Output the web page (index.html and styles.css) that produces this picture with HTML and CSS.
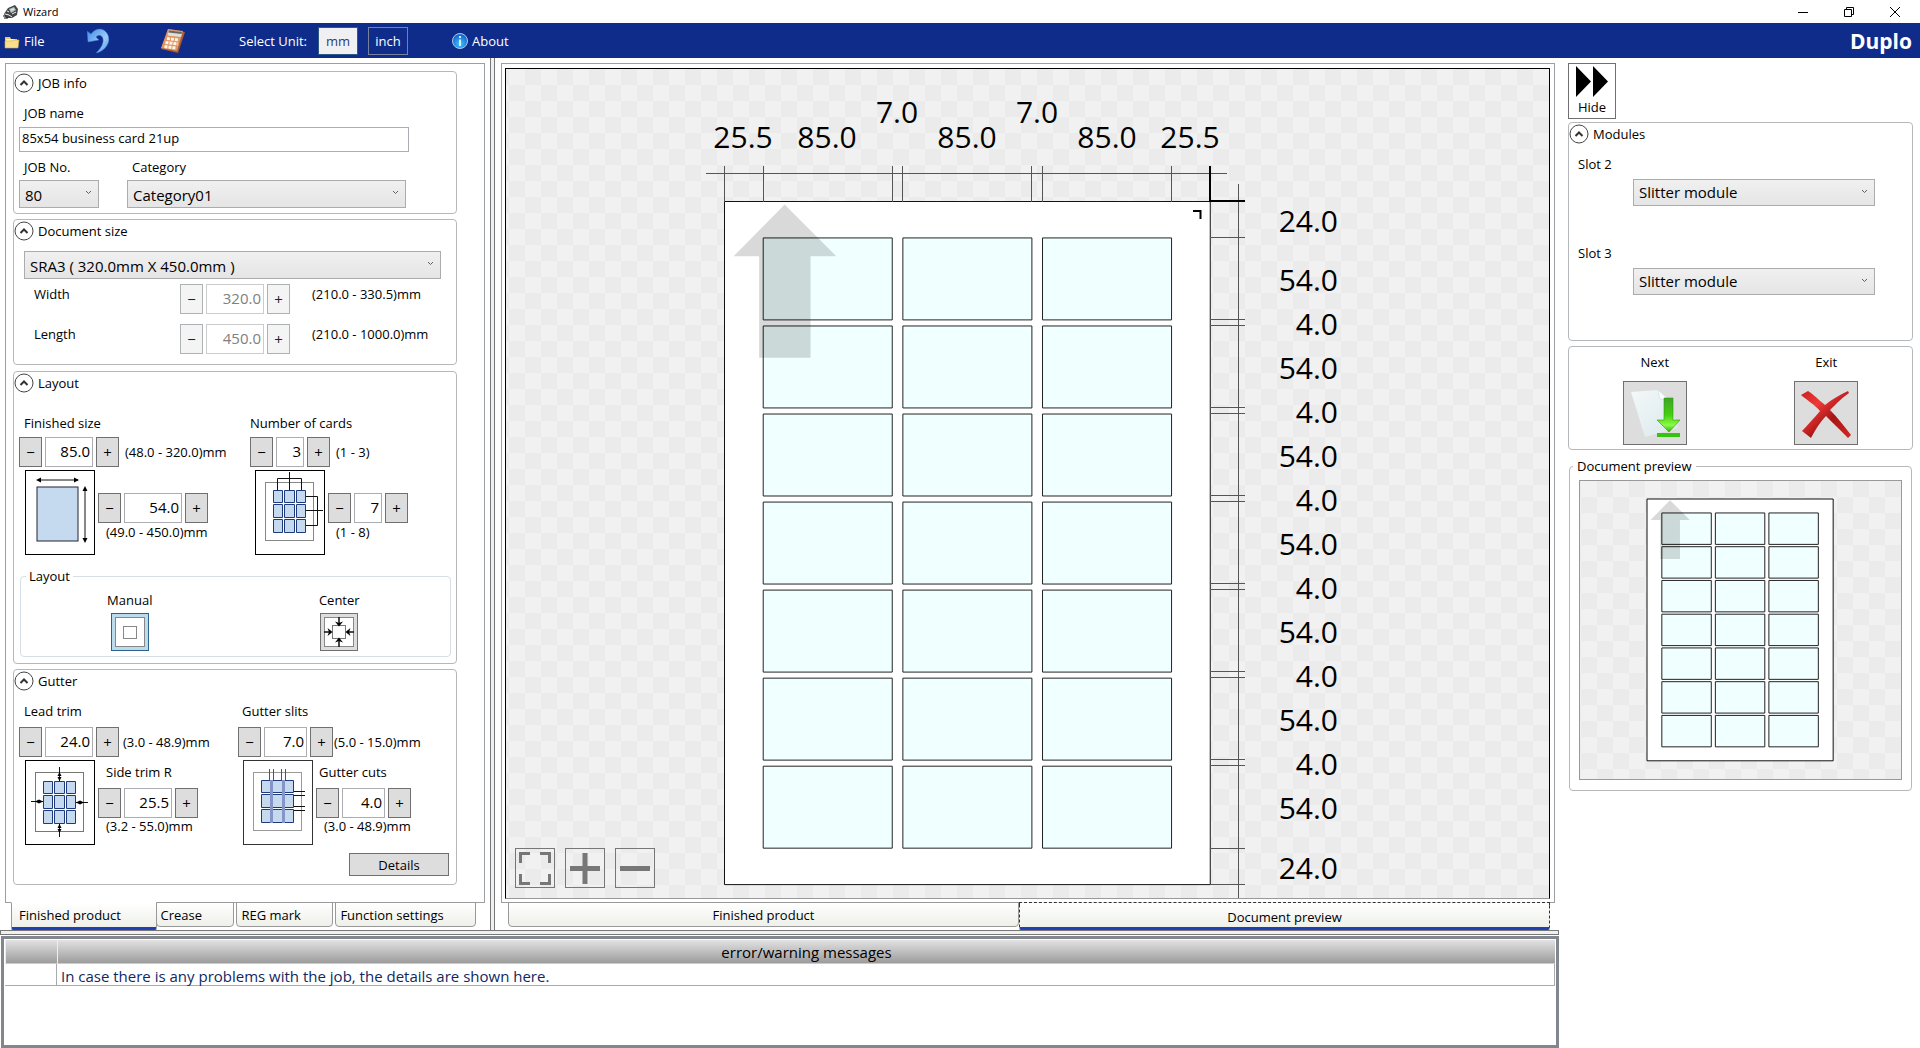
FILE: index.html
```html
<!DOCTYPE html>
<html lang="en">
<head>
<meta charset="utf-8">
<title>Wizard</title>
<link rel="stylesheet" href="styles.css">
</head>
<body>
<svg class="defs" aria-hidden="true">
  <defs>
    <linearGradient id="blueArrow" x1="0" y1="0" x2="1" y2="1"><stop offset="0" stop-color="#3f8be6"/><stop offset=".6" stop-color="#9ccbf8"/><stop offset="1" stop-color="#4b93e6"/></linearGradient>
    <linearGradient id="paper" x1="0" y1="0" x2="1" y2="1"><stop offset="0" stop-color="#f4f8f9"/><stop offset="1" stop-color="#d9e8ec"/></linearGradient>
    <linearGradient id="green" x1="0" y1="0" x2="0" y2="1"><stop offset="0" stop-color="#3fa32a"/><stop offset=".5" stop-color="#45d00c"/><stop offset=".8" stop-color="#8dfa4a"/><stop offset="1" stop-color="#2fae06"/></linearGradient>
    <linearGradient id="red" x1="0" y1="0" x2="1" y2="1"><stop offset="0" stop-color="#c92020"/><stop offset=".3" stop-color="#ee3a38"/><stop offset=".6" stop-color="#a81515"/><stop offset="1" stop-color="#d62424"/></linearGradient>
    <radialGradient id="info" cx=".5" cy=".7" r=".6"><stop offset="0" stop-color="#43c4ff"/><stop offset="1" stop-color="#1668cc"/></radialGradient>
    <symbol id="chevron" viewBox="0 0 20 20"><circle cx="10" cy="10" r="9" fill="#fff" stroke="#444"/><path d="M6.500 12 10 8.500 13.500 12" fill="none" stroke="#333" stroke-width="2"/></symbol>
    <g id="row" class="card-row"><rect x="25.500" width="85" height="54"/><rect x="117.500" width="85" height="54"/><rect x="209.500" width="85" height="54"/></g>
    <g id="sheet">
      <rect class="paper" width="320" height="450"/>
      <use href="#row" y="24"/><use href="#row" y="82"/><use href="#row" y="140"/><use href="#row" y="198"/><use href="#row" y="256"/><use href="#row" y="314"/><use href="#row" y="372"/>
      <path class="feed" d="M39.600 2 73.600 36H56.700V103H22.800V36H6Z"/>
    </g>
    <g id="nine" fill="#c5daef" stroke="#1f3a7a">
      <path d="M.5.500h9v12h-9zM11.500.500h10v12h-10zM23.500.500h9v12h-9zM.5 14.500h9v13h-9zM11.500 14.500h10v13h-10zM23.500 14.500h9v13h-9zM.5 29.500h9v13h-9zM11.500 29.500h10v13h-10zM23.500 29.500h9v13h-9z"/>
    </g>
  </defs>
</svg>

<header class="titlebar">
  <svg class="app-icon" viewBox="0 0 16 14" aria-hidden="true"><path d="M1 9 5 3 12 0 15 4 14 10 9 13 3 13Z" fill="#444"/><path d="M6 4 11 2 13 5 8 8Z" fill="#b8c4c8"/><path d="M2 9 6 10 9 12M9 9 13 7M4 6 6 7M8 5 11 4" stroke="#eee" fill="none"/><path d="M0 11h3M1 13h4" stroke="#111"/></svg>
  <h1>Wizard</h1>
  <div class="window-buttons">
    <button type="button" aria-label="Minimize"><svg viewBox="0 0 12 12"><path d="M1 6.500H11" /></svg></button>
    <button type="button" aria-label="Restore"><svg viewBox="0 0 12 12"><path d="M1.500 3.500h7v7h-7zM3.500 3.500v-2h7v7h-2"/></svg></button>
    <button type="button" aria-label="Close"><svg viewBox="0 0 12 12"><path d="M1 1 11 11M11 1 1 11"/></svg></button>
  </div>
</header>

<nav class="toolbar" aria-label="Main">
  <button type="button" class="tool file"><svg viewBox="0 0 16 14"><path d="M1 2h5l1 2h6v9H1z" fill="#eec768"/><path d="M2 4h9v8H2z" fill="#fff3c0"/><path d="M1 6h7l1-1h6l-1 8H1z" fill="#fbe08d" stroke="#d9a941" stroke-width=".6"/></svg>File</button>
  <button type="button" class="tool undo" aria-label="Undo"><svg viewBox="0 0 22 26"><path d="M0 3 1 14 12 12 9 9C13 5 17 9 16 14 15 19 12 22 9 25 15 24 21 19 22 12 22 5 17 1 13 1 9 1 6 3 4 6Z" fill="url(#blueArrow)" stroke="#2f70cf" stroke-width=".5"/></svg></button>
  <button type="button" class="tool calc" aria-label="Calculator"><svg viewBox="0 0 26 26"><path d="M8 1 25 4 18 25 1 21Z" fill="#a85a30"/><path d="M8 1 23 3 17 23 1 20Z" fill="#dd9568"/><path d="M9 2.500 22 4 21 9 7.500 7.500Z" fill="#dfe0d8"/><path d="M9 2.500 22 4 21.500 6 8.500 4.500Z" fill="#666"/><path d="M7 10.500 19 12M5.500 14.500 18 16M4.500 18.500 16 20" stroke="#fff6e6" stroke-width="3" stroke-dasharray="3 1"/></svg></button>
  <span class="unit-label">Select Unit:</span>
  <button type="button" class="unit on" aria-pressed="true">mm</button>
  <button type="button" class="unit" aria-pressed="false">inch</button>
  <button type="button" class="tool about"><svg viewBox="0 0 16 16"><circle cx="8" cy="8" r="7.500" fill="url(#info)" stroke="#a9cdee"/><path d="M8 6.500V13M8 3v2" stroke="#fff" stroke-width="1.600"/></svg>About</button>
  <span class="brand">Duplo</span>
</nav>

<main class="workspace">
  <div class="work">
    <div class="panes">
      <section class="settings">
        <form class="tab-page">
          <section class="group job">
            <h2><svg><use href="#chevron"/></svg>JOB info</h2>
            <label for="jobname">JOB name</label>
            <input id="jobname" class="job-name" type="text" value="85x54 business card 21up">
            <div class="job-row">
              <div class="field"><label for="jobno">JOB No.</label><select id="jobno"><option>80</option></select></div>
              <div class="field wide"><label for="category">Category</label><select id="category"><option>Category01</option></select></div>
            </div>
          </section>

          <section class="group doc">
            <h2><svg><use href="#chevron"/></svg>Document size</h2>
            <select aria-label="Document size"><option>SRA3 ( 320.0mm X 450.0mm )</option></select>
            <div class="doc-row">
              <label for="width">Width</label>
              <div class="stepper w58 off"><button type="button" disabled aria-label="Decrease">−</button><input id="width" type="text" value="320.0" disabled><button type="button" disabled aria-label="Increase">+</button></div>
              <span class="range">(210.0 - 330.5)mm</span>
            </div>
            <div class="doc-row">
              <label for="length">Length</label>
              <div class="stepper w58 off"><button type="button" disabled aria-label="Decrease">−</button><input id="length" type="text" value="450.0" disabled><button type="button" disabled aria-label="Increase">+</button></div>
              <span class="range">(210.0 - 1000.0)mm</span>
            </div>
          </section>

          <section class="group layout">
            <h2><svg><use href="#chevron"/></svg>Layout</h2>
            <div class="pair">
              <div class="block">
                <label for="fsx">Finished size</label>
                <div class="line"><div class="stepper w48"><button type="button" aria-label="Decrease">−</button><input id="fsx" type="text" value="85.0"><button type="button" aria-label="Increase">+</button></div><span class="range">(48.0 - 320.0)mm</span></div>
                <div class="figure">
                  <svg viewBox="0 0 70 85"><rect x=".5" y=".5" width="69" height="84" fill="#fff" stroke="#000"/><rect x="12" y="17" width="41" height="54" fill="#c5daef" stroke="#223"/><path d="M13 10H53M60 18V71" stroke="#111"/><path d="M11 10l5-2.500v5zM54 10l-5-2.500v5zM60 16l-2.500 5h5zM60 73l-2.500-5h5z"/></svg>
                  <div class="side"><div class="stepper w58"><button type="button" aria-label="Decrease">−</button><input type="text" value="54.0" aria-label="Finished length"><button type="button" aria-label="Increase">+</button></div><span class="range">(49.0 - 450.0)mm</span></div>
                </div>
              </div>
              <div class="block">
                <label for="cards">Number of cards</label>
                <div class="line"><div class="stepper w28"><button type="button" aria-label="Decrease">−</button><input id="cards" type="text" value="3"><button type="button" aria-label="Increase">+</button></div><span class="range">(1 - 3)</span></div>
                <div class="figure">
                  <svg viewBox="0 0 70 85"><rect x=".5" y=".5" width="69" height="84" fill="#fff" stroke="#000"/><rect x="10.500" y="12.500" width="48" height="58" fill="none" stroke="#888"/><use href="#nine" x="18" y="20"/><path d="M22.500 20V8.500H46.500V20M34.500 2V20M51 26.500H62.500V55.500H51M51 40.500H68" fill="none" stroke="#111"/></svg>
                  <div class="side"><div class="stepper w28"><button type="button" aria-label="Decrease">−</button><input type="text" value="7" aria-label="Rows of cards"><button type="button" aria-label="Increase">+</button></div><span class="range">(1 - 8)</span></div>
                </div>
              </div>
            </div>
            <fieldset class="align">
              <legend>Layout</legend>
              <div class="choice"><span id="lm">Manual</span><button type="button" class="on" aria-labelledby="lm"><svg viewBox="0 0 30 30"><rect x=".5" y=".5" width="29" height="29" fill="#fff" stroke="#888"/><rect x="8.500" y="9.500" width="13" height="12" fill="#fff" stroke="#888"/></svg></button></div>
              <div class="choice"><span id="lc">Center</span><button type="button" aria-labelledby="lc"><svg viewBox="0 0 30 30"><rect x=".5" y=".5" width="29" height="29" fill="#fff" stroke="#888"/><rect x="8.500" y="8.500" width="13" height="13" fill="#fff" stroke="#777"/><path d="M15 0V7M15 30V23M0 15H7M30 15H23" stroke="#111" stroke-width="1.500"/><path d="M15 9.500 11 4.500l4 1.500 4-1.500zM15 20.500l-4 5 4-1.500 4 1.500zM8.500 15l-5-4 1.500 4-1.500 4zM21.500 15l5-4-1.500 4 1.500 4z"/></svg></button></div>
            </fieldset>
          </section>

          <section class="group gutter">
            <h2><svg><use href="#chevron"/></svg>Gutter</h2>
            <div class="pair">
              <div class="block">
                <label for="lead">Lead trim</label>
                <div class="line"><div class="stepper w48"><button type="button" aria-label="Decrease">−</button><input id="lead" type="text" value="24.0"><button type="button" aria-label="Increase">+</button></div><span class="range">(3.0 - 48.9)mm</span></div>
                <div class="figure">
                  <svg viewBox="0 0 70 85"><rect x=".5" y=".5" width="69" height="84" fill="#fff" stroke="#000"/><rect x="10.500" y="12.500" width="48" height="59" fill="none" stroke="#777"/><use href="#nine" x="18" y="21"/><path d="M34.500 7V21M34.500 64V77M6 41.500H18M51 42.500H63" stroke="#111"/><path d="M34.500 12l-2 4h4zM34.500 21l-2-4h4zM34.500 64l-2 4h4zM34.500 73l-2-4h4zM10 41.500l4-2v4zM18 41.500l-4-2v4zM51 42.500l4-2v4zM59 42.500l-4-2v4z"/></svg>
                  <div class="side"><label for="side">Side trim R</label><div class="stepper w48"><button type="button" aria-label="Decrease">−</button><input id="side" type="text" value="25.5"><button type="button" aria-label="Increase">+</button></div><span class="range">(3.2 - 55.0)mm</span></div>
                </div>
              </div>
              <div class="block">
                <label for="slits">Gutter slits</label>
                <div class="line"><div class="stepper w43"><button type="button" aria-label="Decrease">−</button><input id="slits" type="text" value="7.0"><button type="button" aria-label="Increase">+</button></div><span class="range">(5.0 - 15.0)mm</span></div>
                <div class="figure">
                  <svg viewBox="0 0 70 85"><rect x=".5" y=".5" width="69" height="84" fill="#fff" stroke="#333"/><rect x="10.500" y="12.500" width="48" height="58" fill="none" stroke="#999"/><use href="#nine" x="18" y="20"/><path d="M27 20h3v43h-3zM39 20h3v43h-3z" fill="#8595c8"/><path d="M26.500 9V20M30.500 9V20M38.500 9V20M42.500 9V20" stroke="#555"/><path d="M51 31.500H62M51 35.500H62M51 46.500H62M51 50.500H62" stroke="#111"/></svg>
                  <div class="side"><label for="cuts">Gutter cuts</label><div class="stepper w43"><button type="button" aria-label="Decrease">−</button><input id="cuts" type="text" value="4.0"><button type="button" aria-label="Increase">+</button></div><span class="range">(3.0 - 48.9)mm</span></div>
                </div>
              </div>
            </div>
            <button type="button" class="details">Details</button>
          </section>
        </form>
        <div class="tabs" role="tablist">
          <button type="button" role="tab" class="on" aria-selected="true">Finished product</button>
          <button type="button" role="tab">Crease</button>
          <button type="button" role="tab">REG mark</button>
          <button type="button" role="tab">Function settings</button>
        </div>
      </section>

      <div class="splitter-v"></div>

      <section class="viewer">
        <div class="tab-page">
          <div class="canvas">
            <svg class="drawing" viewBox="506 69 1043 829" role="img" aria-label="Sheet with dimensions">
              <g transform="translate(724.500 201.500) scale(1.518)"><use href="#sheet"/></g>
              <path d="M1193 211H1200.500V219" fill="none" stroke="#000" stroke-width="2"/>
              <g class="dims">
                <path d="M706 173.500H1227M724.500 166V202M763.500 166V202M892.500 166V202M902.500 166V202M1031.500 166V202M1042.500 166V202M1171.500 166V202"/>
                <path d="M1238.500 184V898M1210 237.500H1245M1210 319.500H1245M1210 325.500H1245M1210 407.500H1245M1210 413.500H1245M1210 495.500H1245M1210 501.500H1245M1210 583.500H1245M1210 589.500H1245M1210 671.500H1245M1210 677.500H1245M1210 759.500H1245M1210 765.500H1245M1210 848.500H1245M1210 884.500H1245"/>
                <path class="origin" d="M1210 166V201H1245"/>
              </g>
              <g class="dim-top">
                <text x="743" y="148">25.5</text><text x="827" y="148">85.0</text><text x="897" y="123">7.0</text><text x="967" y="148">85.0</text><text x="1037" y="123">7.0</text><text x="1107" y="148">85.0</text><text x="1190" y="148">25.5</text>
              </g>
              <g class="dim-side">
                <text x="1338" y="232">24.0</text><text x="1338" y="291">54.0</text><text x="1338" y="335">4.0</text><text x="1338" y="379">54.0</text><text x="1338" y="423">4.0</text><text x="1338" y="467">54.0</text><text x="1338" y="511">4.0</text><text x="1338" y="555">54.0</text><text x="1338" y="599">4.0</text><text x="1338" y="643">54.0</text><text x="1338" y="687">4.0</text><text x="1338" y="731">54.0</text><text x="1338" y="775">4.0</text><text x="1338" y="819">54.0</text><text x="1338" y="879">24.0</text>
              </g>
            </svg>
            <div class="zoom-bar">
              <button type="button" aria-label="Fit"><svg viewBox="0 0 38 38"><path d="M4.500 14V4.500H14M24 4.500H33.500V14M33.500 25V34.500H24M14 34.500H4.500V25"/></svg></button>
              <button type="button" aria-label="Zoom in"><svg viewBox="0 0 38 38"><path class="bold" d="M4 19.500H34M19 4V35"/></svg></button>
              <button type="button" aria-label="Zoom out"><svg viewBox="0 0 38 38"><path class="bold" d="M4 19.500H34"/></svg></button>
            </div>
          </div>
        </div>
        <div class="tabs view-tabs" role="tablist">
          <button type="button" role="tab">Finished product</button>
          <button type="button" role="tab" class="on focus" aria-selected="true">Document preview</button>
        </div>
      </section>
    </div>

    <div class="splitter-h"></div>

    <div class="messages">
      <table>
        <thead><tr><th class="mark"></th><th>error/warning messages</th></tr></thead>
        <tbody><tr><td class="mark"></td><td>In case there is any problems with the job, the details are shown here.</td></tr></tbody>
      </table>
    </div>
  </div>

  <aside class="sidebar">
    <button type="button" class="hide"><svg viewBox="0 0 32 31"><path d="M0 0 15 15.500 0 31ZM17 0 32 15.500 17 31Z"/></svg>Hide</button>
    <section class="group modules">
      <h2><svg><use href="#chevron"/></svg>Modules</h2>
      <label for="slot2">Slot 2</label>
      <select id="slot2"><option>Slitter module</option></select>
      <label for="slot3">Slot 3</label>
      <select id="slot3"><option>Slitter module</option></select>
    </section>
    <section class="group actions">
      <div class="choice"><span id="next">Next</span><button type="button" aria-labelledby="next"><svg viewBox="0 0 62 62"><path d="M7 10 34 8 45 18 54 46 21 55Z" fill="url(#paper)"/><path d="M34 8 36 17 45 18Z" fill="#fff" stroke="#c8dde2" stroke-width=".6"/><path d="M40 16h9v22h7L45 50 33 38h7z" fill="url(#green)" stroke="#2f9b12" stroke-width=".6"/><path d="M33 51h23v4H33z" fill="#36c50f"/></svg></button></div>
      <div class="choice"><span id="exit">Exit</span><button type="button" aria-labelledby="exit"><svg viewBox="0 0 62 62"><path d="M6 13 13 9C18 12 24 18 30 23 36 18 44 13 53 9L54 11C48 15 41 22 35 28 42 35 49 44 56 53L53 56C46 49 38 41 31 34 24 41 20 49 16 56L7 49C12 44 19 36 25 29 20 23 12 18 6 13Z" fill="url(#red)"/></svg></button></div>
    </section>
    <fieldset class="preview">
      <legend>Document preview</legend>
      <div class="mini"><svg viewBox="0 0 320 450" role="img" aria-label="Sheet preview"><use href="#sheet"/></svg></div>
    </fieldset>
  </aside>
</main>
</body>
</html>
```
FILE: styles.css
```css
* { box-sizing: border-box; }

body {
  margin: 0;
  min-height: 100vh;
  display: flex;
  flex-direction: column;
  background: #fff;
  color: #000;
  font: 13px/20px "Open Sans", "Noto Sans", sans-serif;
}

button, input, select { font: inherit; color: inherit; margin: 0; border-radius: 0; }
button { padding: 0; }
.defs { position: absolute; width: 0; height: 0; }

/* Title bar */
.titlebar { display: flex; align-items: center; height: 23px; padding: 0 13px 0 3px; }
.app-icon { width: 16px; height: 14px; margin-right: 4px; }
.titlebar h1 { margin: 0; font-size: 11px; font-weight: 400; }
.window-buttons { display: flex; gap: 22px; margin-left: auto; }
.window-buttons button { width: 24px; height: 20px; border: 0; background: none; }
.window-buttons svg { width: 12px; height: 12px; fill: none; stroke: #000; display: block; margin: 0 auto; }

/* Toolbar */
.toolbar { display: flex; align-items: center; height: 35px; padding-right: 8px; background: #102c8a; color: #fff; }
.tool { display: flex; align-items: center; gap: 4px; border: 0; background: none; }
.file { width: 87px; padding-left: 4px; }
.file svg { width: 16px; height: 14px; margin-top: 2px; }
.undo { width: 73px; }
.undo svg { width: 22px; height: 26px; }
.calc { width: 79px; }
.calc svg { width: 26px; height: 26px; }
.unit-label { width: 79px; }
.unit { width: 40px; height: 28px; margin-right: 10px; border: 1px solid #76819f; background: none; }
.unit.on { background: #f0f0f2; color: #2c3f75; border-color: #2c5a84; }
.about { margin-left: 34px; }
.about svg { width: 16px; height: 16px; }
.brand { margin-left: auto; font-size: 21px; font-weight: 700; }

/* Main split */
.workspace { flex: 1; display: grid; grid-template-columns: minmax(0, 1fr) 361px; }
.work { display: flex; flex-direction: column; }
.panes { flex: 1; display: grid; grid-template-columns: 490px 5px minmax(0, 1fr); }
.splitter-v { border: solid #777; border-width: 0 1px; background: #f0f0f0; }
.splitter-h { height: 5px; border: 1px solid #777; background: #f0f0f0; }
.settings { display: flex; flex-direction: column; padding: 5px 5px 0; }
.viewer { display: flex; flex-direction: column; padding: 5px 4px 0 6px; }
.tab-page { flex: 1; border: 1px solid #9a9fa3; }
.settings .tab-page { padding: 7px 27px 15px 7px; }
.viewer .tab-page { display: flex; padding: 4px 4px 3px 3px; }

/* Groups */
.group { border: 1px solid #b5b8ba; border-radius: 4px; margin-bottom: 5px; padding: 0 5px; }
.group h2 { display: flex; align-items: center; gap: 4px; height: 22px; margin: 0 0 0 -5px; font-size: 13px; font-weight: 400; }
.group h2 svg { width: 20px; height: 20px; }
label { display: block; padding-left: 5px; }
input[type="text"] { border: 1px solid #abadb3; background: #fff; }

select {
  appearance: none;
  display: block;
  width: 100%;
  height: 27px;
  padding: 0 20px 0 5px;
  border: 1px solid #acacac;
  font-size: 15px;
  line-height: 25px;
  background: url("data:image/svg+xml,%3Csvg xmlns='http://www.w3.org/2000/svg' width='7' height='5'%3E%3Cpath d='M1 1 3.500 3.500 6 1' fill='none' stroke='%23606060'/%3E%3C/svg%3E") no-repeat right 6px top 9px, linear-gradient(#f0f0f0, #e5e5e5);
}

/* Job info */
.job { padding-bottom: 5px; }
.job > label { margin-top: 9px; }
.job-name { display: block; width: 390px; height: 25px; margin-top: 4px; padding: 0 2px 3px; }
.job-row { display: flex; gap: 28px; margin-top: 5px; }
.field { width: 80px; }
.field.wide { width: 279px; }
.field select { height: 28px; margin-top: 3px; padding-top: 2px; }

/* Document size */
.doc { padding: 0 15px 10px 10px; margin-bottom: 6px; }
.doc h2, .modules h2 { margin-left: -10px; }
.doc select { height: 28px; margin-top: 9px; padding-top: 2px; }
.doc-row { display: grid; grid-template-columns: 156px 132px 1fr; margin-top: 10px; }
.doc select + .doc-row { margin-top: 5px; }
.doc-row label { padding-left: 10px; }

/* Number steppers */
.stepper { display: grid; grid-template-columns: 23px 48px 23px; gap: 3px; width: max-content; height: 30px; }
.w28 { grid-template-columns: 23px 28px 23px; }
.w43 { grid-template-columns: 23px 43px 23px; }
.w58 { grid-template-columns: 23px 58px 23px; }
.stepper button { border: 1px solid #707070; background: #ddd; font-size: 15px; line-height: 28px; }
.stepper input { width: 100%; padding: 0 2px 2px; text-align: right; font-size: 15px; }
.stepper.off button { border-color: #adb2b5; background: #f4f4f4; color: #222; }
.stepper.off input { border-color: #ccc; color: #808080; }

/* Layout and gutter */
.pair { display: grid; grid-template-columns: 231px 1fr; }
.layout .pair { margin-top: 19px; }
.block > label { margin-bottom: 4px; }
.block + .block > label { padding-left: 0; }
.line { display: flex; gap: 6px; align-items: center; margin-bottom: 3px; }
.figure { display: flex; gap: 3px; padding-left: 6px; }
.block + .block .figure { padding-left: 5px; }
.figure > svg { width: 70px; height: 85px; flex: none; }
.side { padding-top: 23px; }
.side .range { display: block; padding-left: 8px; line-height: 18px; }
.align { display: flex; margin: 11px 0 6px 1px; padding: 4px 6px 5px 4px; border: 1px solid #d5dfe5; border-radius: 4px; }
.align legend { margin-left: 1px; padding: 0 3px; }
.choice { flex: 1; display: flex; flex-direction: column; align-items: center; }
.align .choice button { width: 38px; height: 38px; margin-top: 3px; border: 1px solid #707070; background: #ddd; }
.align .choice .on { border-color: #2c628b; background: #bcdcee; }
.align svg { display: block; width: 30px; height: 30px; margin: 3px; }
.gutter { padding-bottom: 8px; margin-bottom: 0; }
.gutter .pair { margin-top: 9px; grid-template-columns: 219px 1fr; }
.gutter .block > label { margin-bottom: 6px; }
.gutter .block + .block > label { padding-left: 4px; }
.gutter .line { gap: 4px; }
.gutter .block + .block .line { gap: 1px; }
.gutter .side { padding-top: 2px; }
.gutter .side label { padding-left: 8px; margin-bottom: 6px; }
.gutter .block + .block .side label { padding-left: 3px; }
.gutter .side .range { line-height: 16px; }
.details { display: block; width: 100px; height: 23px; margin: 8px 2px 0 auto; border: 1px solid #707070; background: #ddd; }

/* Bottom tabs */
.tabs { display: flex; gap: 2px; height: 27px; align-items: flex-start; padding: 0 9px 0 6px; }
.tabs button { height: 25px; margin-top: -1px; padding: 0 0 0 3px; text-align: left; border: 1px solid #999; border-radius: 0 0 4px 4px; background: linear-gradient(#fff, #eef0e9); }
.tabs .on { height: 28px; padding-left: 7px; border-top-color: #fff; border-bottom: 3px solid #1f41b5; border-radius: 0 0 2px 2px; }
.settings .tabs button { flex: 142; }
.settings .tabs button:nth-child(1) { flex: 145; margin-right: -3px; }
.settings .tabs button:nth-child(2) { flex: 77; }
.settings .tabs button:nth-child(3) { flex: 96; padding-left: 4px; }
.settings .tabs button:nth-child(4) { padding-left: 4px; }
.view-tabs { gap: 0; padding: 0 5px 0 7px; }
.view-tabs button { flex: 511; padding: 0; text-align: center; }
.view-tabs .focus { flex: 531; padding: 3px 0 0; border: 1px dashed #333; border-bottom: 3px solid #1f41b5; }

/* Drawing area */
.canvas, .mini { background: repeating-conic-gradient(#ebebeb 0 25%, #f1f1f1 0 50%) 3px 0 / 32px 32px; }
.canvas { position: relative; flex: 1; border: 1px solid #000; border-bottom-color: #999; }
.drawing { display: block; width: 100%; height: 100%; }
.paper { fill: #fff; stroke: #111; vector-effect: non-scaling-stroke; }
.card-row rect { fill: #f0ffff; stroke: #222; vector-effect: non-scaling-stroke; }
.feed { fill: #000; fill-opacity: .15; }
.dims path { fill: none; stroke: #555; }
.dims .origin { stroke: #000; stroke-width: 2; }
.drawing text { font-size: 30px; }
.dim-top { text-anchor: middle; }
.dim-side { text-anchor: end; }
.zoom-bar { position: absolute; left: 9px; bottom: 10px; display: flex; gap: 10px; }
.zoom-bar button { width: 40px; height: 40px; border: 1px solid #777; background: none; }
.zoom-bar svg { display: block; width: 38px; height: 38px; fill: none; stroke: #777; stroke-width: 3; }
.zoom-bar .bold { stroke-width: 5; }

/* Messages */
.messages { height: 112px; margin: 1px 0 1px 1px; border: 3px solid #82878f; padding: 1px 1px 0; }
.messages table { width: 100%; border-collapse: separate; border-spacing: 0; font-size: 15px; }
.messages th { height: 24px; padding: 0; font-weight: 400; border-left: 1px solid #eee; border-bottom: 1px solid #ccc; background: linear-gradient(#e2e2e2, #9c9c9c); }
.messages td { height: 22px; padding: 3px 4px 0; line-height: 18px; color: #10285f; border: solid #aaa; border-width: 0 1px 1px 0; }
.messages .mark { width: 52px; }

/* Sidebar */
.sidebar { padding: 5px 7px 0 9px; }
.hide { display: flex; flex-direction: column; align-items: center; width: 48px; height: 56px; margin-bottom: 3px; padding-top: 2px; border: 1px solid #707070; background: #fff; }
.hide svg { width: 32px; height: 31px; }
.modules { height: 219px; padding: 0 37px 0 64px; }
.modules h2 { margin-left: -64px; }
.modules label { margin: 9px 0 5px -55px; padding: 0; }
.modules select + label { margin-top: 37px; }
.actions { display: flex; padding: 5px 0 4px; }
.actions button { width: 64px; height: 64px; margin-top: 9px; border: 1px solid #707070; background: #ddd; }
.actions svg { display: block; width: 62px; height: 62px; }
.preview { margin: 6px 1px 0; padding: 4px 9px 10px; border: 1px solid #b5b8ba; border-radius: 4px; }
.preview legend { margin-left: -6px; padding: 0 4px; }
.mini { display: flex; align-items: center; justify-content: center; height: 300px; border: 1px solid #999; background-position: 1px 0; }
.mini svg { width: 58%; overflow: visible; }
```
